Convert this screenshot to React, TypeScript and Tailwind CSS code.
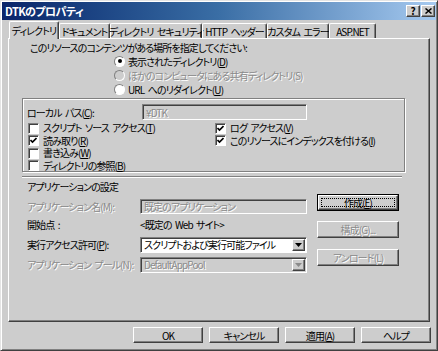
import React from 'react';

const raised =
  'border border-t-white border-l-white border-r-[#404040] border-b-[#404040] shadow-[inset_-1px_-1px_0_#808080]';
const sunken =
  'border border-t-[#808080] border-l-[#808080] border-r-white border-b-white shadow-[inset_1px_1px_0_#404040]';
const etched = 'border border-[#808080] shadow-[inset_1px_1px_0_white,1px_1px_0_white]';
const dim = 'text-[#8a8a8a] [text-shadow:1px_1px_0_white]';

const U = ({ children }: { children: React.ReactNode }) => (
  <span className="underline underline-offset-[1px]">{children}</span>
);

const Check = ({ checked }: { checked?: boolean }) => (
  <span className={`w-[11px] h-[11px] bg-white shrink-0 flex items-center justify-center ${sunken}`}>
    {checked && (
      <svg width="7" height="7" viewBox="0 0 7 7">
        <path d="M0.5 3 L2.5 5 L6.5 1" stroke="#000" strokeWidth="1.6" fill="none" />
      </svg>
    )}
  </span>
);

const Radio = ({ checked, disabled }: { checked?: boolean; disabled?: boolean }) => (
  <span
    className={`w-[11px] h-[11px] rounded-full shrink-0 flex items-center justify-center border border-t-[#808080] border-l-[#808080] border-r-white border-b-white ${
      disabled ? 'bg-[#cdcdcd]' : 'bg-white'
    }`}
  >
    {checked && <span className="w-[4px] h-[4px] rounded-full bg-black" />}
  </span>
);

const Arrow = ({ disabled }: { disabled?: boolean }) => (
  <span className={`w-[13px] h-full bg-[#cdcdcd] flex items-center justify-center ${raised}`}>
    <svg width="7" height="4" viewBox="0 0 7 4">
      <path d="M0 0 H7 L3.5 4 Z" fill={disabled ? '#8a8a8a' : '#000'} />
    </svg>
  </span>
);

const Btn = ({
  children,
  disabled,
  focused,
  className = '',
}: {
  children: React.ReactNode;
  disabled?: boolean;
  focused?: boolean;
  className?: string;
}) =>
  focused ? (
    <div className={`border border-black ${className}`}>
      <div className={`h-full flex items-center justify-center p-[2px] ${raised}`}>
        <div className="w-full h-full border border-dotted border-black flex items-center justify-center">
          {children}
        </div>
      </div>
    </div>
  ) : (
    <div className={`flex items-center justify-center ${raised} ${disabled ? dim : ''} ${className}`}>
      {children}
    </div>
  );

export default function App() {
  const tabs = ['ドキュメント', 'ディレクトリ セキュリティ', 'HTTP ヘッダー', 'カスタム エラー', 'ASP.NET'];
  const tabW = ['w-[51px]', 'w-[92px]', 'w-[65px]', 'w-[62px]', 'w-[47px]'];

  return (
    <div className="w-[438px] h-[351px] bg-[#cdcdcd] border border-t-[#e4e4e4] border-l-[#e4e4e4] border-r-[#404040] border-b-[#404040] shadow-[inset_1px_1px_0_white,inset_-1px_-1px_0_#808080] p-px flex flex-col whitespace-nowrap text-[10px] leading-[13px] text-black font-['Noto_Sans_CJK_JP',sans-serif] [font-feature-settings:'palt'] tracking-[-0.9px] [word-spacing:2px]">
      {/* title bar */}
      <div className="h-[18px] shrink-0 flex items-center justify-between pl-[3px] pr-[1px] bg-gradient-to-r from-[#0a246a] via-[#3a6ea5] to-[#a6caf0]">
        <span className="text-white font-bold text-[11px] tracking-[-0.6px]">DTKのプロパティ</span>
        <div className="flex gap-[1px] items-center">
          <span className={`w-[14px] h-[12px] bg-[#cdcdcd] flex items-center justify-center font-bold text-[10px] leading-none tracking-normal ${raised}`}>?</span>
          <span className={`w-[14px] h-[12px] bg-[#cdcdcd] flex items-center justify-center ${raised}`}>
            <svg width="7" height="6" viewBox="0 0 7 6">
              <path d="M0.5 0.5 L6.5 5.5 M6.5 0.5 L0.5 5.5" stroke="#000" strokeWidth="1.5" />
            </svg>
          </span>
        </div>
      </div>

      {/* tabs */}
      <div className="h-[18px] shrink-0 flex items-end pl-[7px]">
        <div className="relative z-10 -mb-px h-[18px] w-[50px] bg-[#cdcdcd] border-t border-l border-r border-t-white border-l-white border-r-[#404040] shadow-[inset_-1px_0_0_#808080] rounded-t-[2px] flex items-center justify-center pb-[1px]">
          ディレクトリ
        </div>
        {tabs.map((t, i) => (
          <div
            key={t}
            className={`h-[15px] ${tabW[i]} border-t border-l border-r border-t-white border-l-white border-r-[#404040] shadow-[inset_-1px_0_0_#808080] rounded-t-[2px] flex items-center justify-center`}
          >
            {t}
          </div>
        ))}
      </div>

      {/* panel */}
      <div className="mx-[6px] h-[284px] shrink-0 border border-t-white border-l-white border-r-[#404040] border-b-[#404040] shadow-[inset_-1px_-1px_0_#808080] flex flex-col">
        <div className="mt-px h-[14px] pl-[21px] flex items-center">このリソースのコンテンツがある場所を指定してください:</div>
        <div className="pl-[105px] flex flex-col">
          <div className="h-[14px] flex items-center gap-[3px]">
            <Radio checked />
            <span>
              表示されたディレクトリ(<U>D</U>)
            </span>
          </div>
          <div className="h-[14px] flex items-center gap-[3px]">
            <Radio disabled />
            <span className={dim}>ほかのコンピュータにある共有ディレクトリ(S)</span>
          </div>
          <div className="h-[14px] flex items-center gap-[3px]">
            <Radio />
            <span>
              URL へのリダイレクト(<U>U</U>)
            </span>
          </div>
        </div>

        {/* local path group */}
        <div className={`mt-[2px] ml-[13px] w-[383px] h-[74px] flex flex-col ${etched}`}>
          <div className="mt-[5px] h-[16px] pl-[4px] flex items-center">
            <span className="w-[115px]">
              ローカル パス(<U>C</U>):
            </span>
            <div className={`w-[165px] h-[16px] flex items-center pl-[3px] ${sunken} ${dim}`}>¥DTK</div>
          </div>
          <div className="mt-[2px] pl-[5px] grid grid-cols-[187px_1fr] leading-[12px]">
            <div className="h-[12.5px] flex items-center gap-[4px]">
              <Check />
              <span>
                スクリプト ソース アクセス(<U>T</U>)
              </span>
            </div>
            <div className="h-[12.5px] flex items-center gap-[4px]">
              <Check checked />
              <span>
                ログ アクセス(<U>V</U>)
              </span>
            </div>
            <div className="h-[12.5px] flex items-center gap-[4px]">
              <Check checked />
              <span>
                読み取り(<U>R</U>)
              </span>
            </div>
            <div className="h-[12.5px] flex items-center gap-[4px]">
              <Check checked />
              <span>
                このリソースにインデックスを付ける(<U>I</U>)
              </span>
            </div>
            <div className="h-[12.5px] flex items-center gap-[4px]">
              <Check />
              <span>
                書き込み(<U>W</U>)
              </span>
            </div>
            <div />
            <div className="h-[12.5px] flex items-center gap-[4px]">
              <Check />
              <span>
                ディレクトリの参照(<U>B</U>)
              </span>
            </div>
          </div>
        </div>

        <div className="mt-[4px] ml-[13px] w-[380px] h-[2px] border-t border-t-[#808080] border-b border-b-white" />

        <div className="h-[14px] mt-px pl-[18px] flex items-center">アプリケーションの設定</div>

        {/* application settings */}
        <div className="flex pl-[18px]">
          <div className="flex flex-col w-[280px]">
            <div className="mt-[5px] h-[17px] flex items-center">
              <span className={`w-[113px] ${dim}`}>アプリケーション名(M):</span>
              <div className={`w-[167px] h-[15px] flex items-center pl-[3px] ${sunken} ${dim}`}>既定のアプリケーション</div>
            </div>
            <div className="h-[19px] flex items-center">
              <span className="w-[113px]">開始点 :</span>
              <span>&lt;既定の Web サイト&gt;</span>
            </div>
            <div className="mt-[2px] h-[17px] flex items-center">
              <span className="w-[113px]">
                実行アクセス許可(<U>P</U>):
              </span>
              <div className={`w-[167px] h-[16px] bg-white flex items-center justify-between pl-[3px] pr-px py-px ${sunken}`}>
                <span>スクリプトおよび実行可能ファイル</span>
                <Arrow />
              </div>
            </div>
            <div className="mt-[3px] h-[17px] flex items-center">
              <span className={`w-[113px] ${dim}`}>アプリケーション プール(N):</span>
              <div className={`w-[167px] h-[16px] flex items-center justify-between pl-[3px] pr-px py-px ${sunken}`}>
                <span className={dim}>DefaultAppPool</span>
                <Arrow disabled />
              </div>
            </div>
          </div>
          <div className="ml-[10px] flex flex-col w-[82px]">
            <Btn focused className="mt-px h-[17px]">
              作成(<U>E</U>)
            </Btn>
            <Btn disabled className="mt-[10px] h-[17px]">
              構成(G)...
            </Btn>
            <Btn disabled className="mt-[11px] h-[17px]">
              アンロード(L)
            </Btn>
          </div>
        </div>
      </div>

      {/* dialog buttons */}
      <div className="mt-[5px] pr-[5px] flex justify-end gap-[6px]">
        <Btn className="w-[70px] h-[16px]">OK</Btn>
        <Btn className="w-[70px] h-[16px]">キャンセル</Btn>
        <Btn className="w-[70px] h-[16px]">
          適用(<U>A</U>)
        </Btn>
        <Btn className="w-[70px] h-[16px]">ヘルプ</Btn>
      </div>
    </div>
  );
}
